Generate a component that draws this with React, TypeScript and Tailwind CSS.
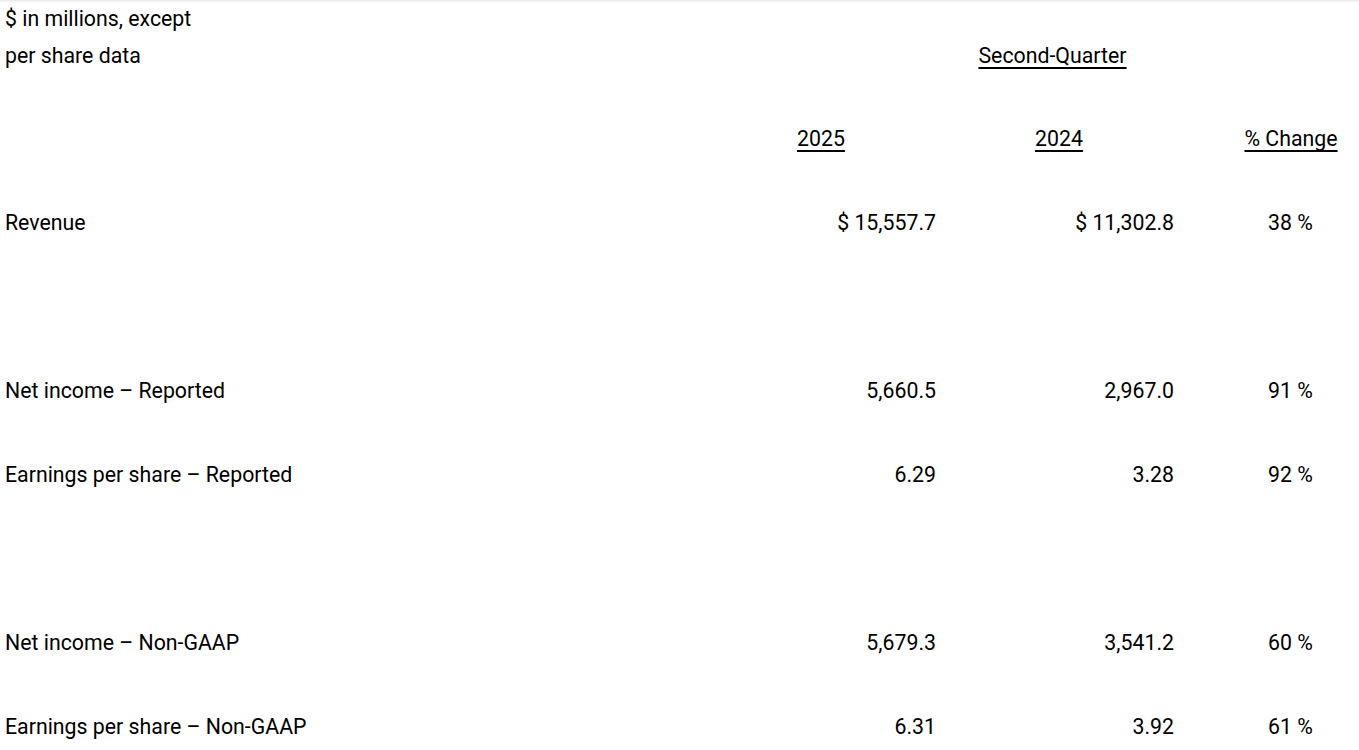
import React from "react";

type Row = { label: string; cur: string; prev: string; pct: string } | null;

const rows: Row[] = [
  { label: "Revenue", cur: "$ 15,557.7", prev: "$ 11,302.8", pct: "38 %" },
  null,
  { label: "Net income – Reported", cur: "5,660.5", prev: "2,967.0", pct: "91 %" },
  { label: "Earnings per share – Reported", cur: "6.29", prev: "3.28", pct: "92 %" },
  null,
  { label: "Net income – Non-GAAP", cur: "5,679.3", prev: "3,541.2", pct: "60 %" },
  { label: "Earnings per share – Non-GAAP", cur: "6.31", prev: "3.92", pct: "61 %" },
];

const ul = "underline decoration-2 underline-offset-[4px]";

export default function App() {
  return (
    <div
      className="w-[1359px] h-[750px] overflow-hidden bg-white text-black text-[21.3px] shadow-[inset_0_3px_3px_-2px_rgba(0,0,0,0.12)]"
      style={{ fontFamily: "Roboto, 'Liberation Sans', sans-serif" }}
    >
      {/* header block */}
      <div className="flex h-[97px]">
        <div className="w-[746px] pl-[5px] leading-[37px]">
          <div>$ in millions, except</div>
          <div>per share data</div>
        </div>
        <div className="w-[613px] pt-[37px] leading-[37px] text-center">
          <span className={ul}>Second-Quarter</span>
        </div>
      </div>

      {/* column headings */}
      <div className="flex h-[84px] items-center">
        <div className="w-[703px]" />
        <div className="w-[236px] text-center">
          <span className={ul}>2025</span>
        </div>
        <div className="w-[240px] text-center">
          <span className={ul}>2024</span>
        </div>
        <div className="w-[44px]" />
        <div className="w-[136px] text-center">
          <span className={ul}>% Change</span>
        </div>
      </div>

      {rows.map((r, i) =>
        r ? (
          <div key={i} className="flex h-[84px] items-center">
            <div className="w-[704px] pl-[5px]">{r.label}</div>
            <div className="w-[236px] pr-[4px] text-right">{r.cur}</div>
            <div className="w-[238px] pr-[4px] text-right">{r.prev}</div>
            <div className="w-[44px]" />
            <div className="w-[137px] text-center">{r.pct}</div>
          </div>
        ) : (
          <div key={i} className="h-[84px]" />
        )
      )}
    </div>
  );
}
